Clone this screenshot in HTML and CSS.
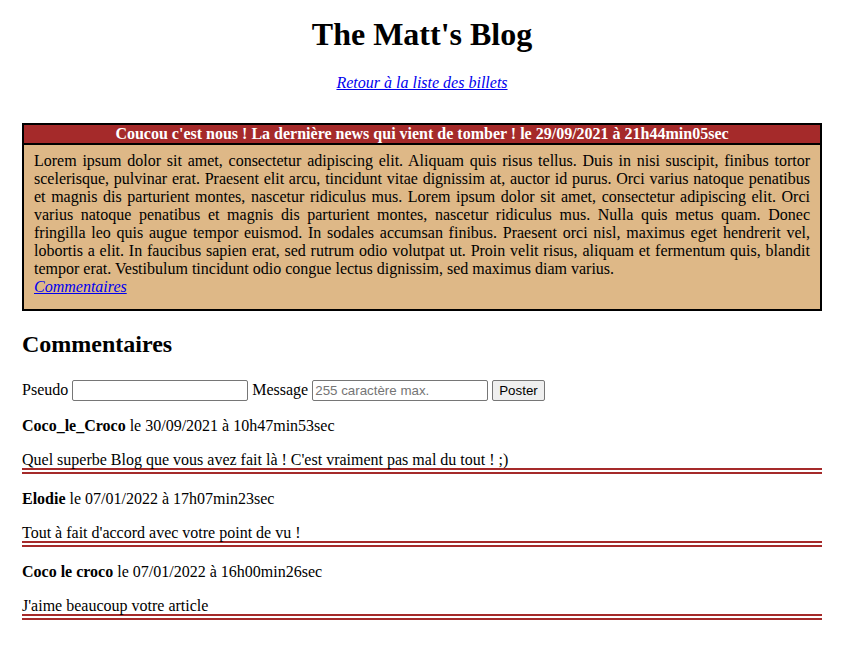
FILE: index.html
```
<!DOCTYPE html>
<html lang="fr">
<head>
<meta charset="utf-8">
<title>The Matt's Blog</title>
<link rel="stylesheet" href="styles.css">
</head>
<body>
<h1 class="title">The Matt's Blog</h1>
<p class="back"><a href="#"><em>Retour à la liste des billets</em></a></p>

<div class="news">
  <h3 class="news-head">Coucou c'est nous ! La dernière news qui vient de tomber ! le 29/09/2021 à 21h44min05sec</h3>
  <p class="news-body">Lorem ipsum dolor sit amet, consectetur adipiscing elit. Aliquam quis risus tellus. Duis in nisi suscipit, finibus tortor scelerisque, pulvinar erat. Praesent elit arcu, tincidunt vitae dignissim at, auctor id purus. Orci varius natoque penatibus et magnis dis parturient montes, nascetur ridiculus mus. Lorem ipsum dolor sit amet, consectetur adipiscing elit. Orci varius natoque penatibus et magnis dis parturient montes, nascetur ridiculus mus. Nulla quis metus quam. Donec fringilla leo quis augue tempor euismod. In sodales accumsan finibus. Praesent orci nisl, maximus eget hendrerit vel, lobortis a elit. In faucibus sapien erat, sed rutrum odio volutpat ut. Proin velit risus, aliquam et fermentum quis, blandit tempor erat. Vestibulum tincidunt odio congue lectus dignissim, sed maximus diam varius.<br>
  <a href="#"><em>Commentaires</em></a></p>
</div>

<h2 class="section-title">Commentaires</h2>
<form class="comment-form">
  <label for="pseudo">Pseudo</label> <input type="text" id="pseudo" name="pseudo"> <label for="message">Message</label> <input type="text" id="message" name="message" placeholder="255 caractère max."> <input type="submit" value="Poster">
</form>

<p class="comment-meta"><strong>Coco_le_Croco</strong> le 30/09/2021 à 10h47min53sec</p>
<p class="comment-text">Quel superbe Blog que vous avez fait là ! C'est vraiment pas mal du tout ! ;)</p>

<p class="comment-meta"><strong>Elodie</strong> le 07/01/2022 à 17h07min23sec</p>
<p class="comment-text">Tout à fait d'accord avec votre point de vu !</p>

<p class="comment-meta"><strong>Coco le croco</strong> le 07/01/2022 à 16h00min26sec</p>
<p class="comment-text">J'aime beaucoup votre article</p>
</body>
</html>
```

FILE: styles.css
```
html {
  background: #ffffff;
}
body {
  width: 800px;
  margin: 0 auto;
  font-family: "Liberation Serif", "Times New Roman", serif;
  font-size: 16px;
  color: #000;
}
.title {
  text-align: center;
  font-size: 32px;
  margin: 16px 0 21px;
}
.back {
  text-align: center;
  margin: 16px 0 31px;
}
a {
  color: #0000ee;
}
.news {
  border: 2px solid #000;
  background: #deb887;
}
.news-head {
  margin: 0;
  background: #a52a2a;
  color: #fff;
  font-size: 16px;
  text-align: center;
  border-bottom: 2px solid #000;
}
.news-body {
  margin: 0;
  padding: 7px 10px 13px;
  text-align: justify;
}
.section-title {
  font-size: 24px;
  margin: 20px 0 22px;
}
.comment-form {
  margin: 0 0 16px;
}
.comment-form input[type="text"] {
  font-family: "Liberation Sans", Arial, sans-serif;
  font-size: 13.33px;
  width: 170px;
  padding: 2px 2px;
  border: 1px solid #767676;
  border-radius: 2px;
}
.comment-form input[type="submit"] {
  font-family: "Liberation Sans", Arial, sans-serif;
  font-size: 13.33px;
  padding: 2px 6px;
  border: 1px solid #767676;
  border-radius: 2px;
  background: #efefef;
}
.comment-meta {
  margin: 16px 0;
  line-height: 17.5px;
}
.comment-text {
  margin: 16px 0;
  line-height: 17.5px;
  border-bottom: 6px double #a52a2a;
}
```
